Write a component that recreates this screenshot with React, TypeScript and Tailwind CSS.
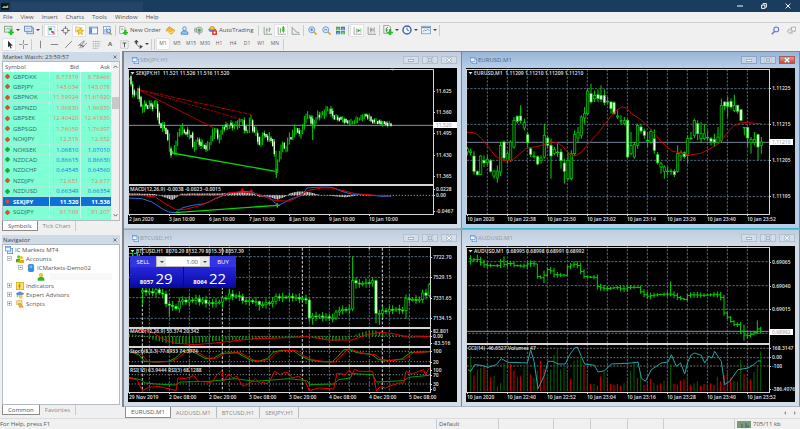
import React, { useState } from "react";

type Point = [number, number];
// x, high, body top, body bottom, low, 1 = rising
type Candle = [number, number, number, number, number, number];

const GREEN = "#00d800";
const SILVER = "#d4d4d4";
const GRID = "#56697c";

const toPath = (points: Point[]) => points.map((p) => p.join(",")).join(" ");

const valueAt = (points: Point[], x: number) => {
  const next = points.findIndex((p) => p[0] >= x);
  if (next === -1) return points[points.length - 1][1];
  if (next === 0) return points[0][1];
  const [x0, y0] = points[next - 1];
  const [x1, y1] = points[next];
  return y0 + ((y1 - y0) * (x - x0)) / (x1 - x0);
};

const steps = (from: number, to: number, step: number) =>
  Array.from({ length: Math.floor((to - from) / step) + 1 }, (_, i) => from + i * step);

/* ---------- market data ---------- */

const quotes: [string, string, string, "up" | "down"][] = [
  ["GBPDKK", "8.77319", "8.78466", "down"],
  ["GBPJPY", "143.034", "143.078", "down"],
  ["GBPNOK", "11.59924", "11.61920", "down"],
  ["GBPNZD", "1.96830", "1.96930", "down"],
  ["GBPSEK", "12.40420", "12.41830", "down"],
  ["GBPSGD", "1.76059", "1.76397", "down"],
  ["NOKJPY", "12.315", "12.332", "down"],
  ["NOKSEK", "1.06810", "1.07010", "up"],
  ["NZDCAD", "0.86615", "0.86630", "up"],
  ["NZDCHF", "0.64545", "0.64560", "up"],
  ["NZDJPY", "72.651", "72.677", "down"],
  ["NZDUSD", "0.66349", "0.66354", "up"],
  ["SEKJPY", "11.520", "11.536", "down"],
  ["SGDJPY", "81.169", "81.207", "down"],
];

const sekPrice: Point[] = [
  [22, 80], [28, 100], [33, 125], [40, 130], [47, 115], [52, 140], [58, 165], [64, 175], [68, 155], [76, 165],
  [84, 155], [92, 165], [98, 150], [103, 160], [107, 190], [112, 215], [120, 225], [130, 230], [137, 260], [142, 290],
  [148, 305], [153, 300], [160, 285], [166, 255], [175, 225], [183, 240], [192, 240], [200, 250], [207, 250], [212, 285],
  [218, 280], [226, 262], [234, 275], [243, 280], [252, 288], [260, 280], [268, 255], [276, 235], [283, 240], [288, 262],
  [296, 250], [302, 225], [312, 225], [322, 220], [332, 222], [344, 218], [352, 210], [362, 208], [368, 235], [376, 238],
  [382, 208], [387, 205], [393, 235], [402, 243], [408, 265], [413, 280], [420, 250], [430, 250], [440, 260], [447, 262],
  [455, 285], [460, 340], [463, 360], [468, 320], [474, 300], [480, 275], [486, 290], [494, 285], [500, 255], [508, 255],
  [518, 230], [526, 240], [534, 245], [540, 240], [546, 200], [554, 192], [564, 195], [570, 220], [576, 215], [584, 190],
  [594, 190], [604, 185], [614, 172], [622, 175], [632, 190], [644, 200], [656, 200], [669, 208], [682, 212], [694, 210],
  [704, 203], [716, 198], [729, 190], [739, 195], [749, 208], [760, 208], [772, 212], [784, 214], [796, 216], [808, 218],
];

const sekMacd: Point[] = [
  [22, 424], [100, 426], [118, 432], [150, 444], [165, 436], [175, 425], [320, 424], [360, 418], [395, 424], [410, 434],
  [440, 434], [465, 443], [490, 434], [504, 424], [530, 418], [560, 420], [590, 428], [630, 432], [670, 436], [710, 430], [760, 431],
];

const sekRed: Point[] = [
  [20, 430], [50, 430], [100, 435], [130, 455], [160, 472], [190, 472], [230, 462], [260, 450], [290, 435], [320, 422],
  [360, 420], [400, 424], [430, 435], [460, 446], [490, 447], [504, 447], [530, 432], [560, 415], [600, 408], [630, 408],
  [660, 415], [700, 425], [760, 430], [804, 432],
];

const sekBlue: Point[] = [
  [20, 438], [60, 440], [90, 450], [120, 470], [140, 480], [160, 482], [180, 468], [210, 460], [250, 455], [280, 440],
  [320, 425], [350, 420], [380, 418], [410, 428], [440, 435], [455, 450], [470, 460], [490, 450], [504, 442], [540, 430],
  [555, 408], [600, 405], [630, 406], [660, 418], [690, 427], [730, 428], [780, 433], [808, 433],
];

const eurCandles: Candle[] = [
  [22, 285, 290, 300, 310, 1], [32, 290, 297, 302, 310, 1], [42, 298, 312, 358, 368, 0], [52, 355, 358, 368, 370, 0],
  [62, 310, 312, 368, 370, 1], [72, 310, 325, 333, 345, 0], [82, 310, 322, 332, 340, 1], [92, 322, 325, 358, 362, 0],
  [102, 355, 357, 372, 380, 1], [112, 340, 357, 378, 392, 1], [122, 270, 280, 360, 372, 1], [132, 265, 270, 318, 328, 0],
  [142, 300, 305, 325, 335, 1], [152, 265, 270, 325, 330, 1], [162, 195, 205, 285, 290, 1], [172, 190, 193, 208, 215, 0],
  [182, 160, 192, 206, 215, 0], [193, 200, 212, 228, 235, 1], [203, 240, 248, 272, 290, 0], [212, 285, 290, 307, 315, 0],
  [222, 298, 312, 314, 320, 1], [233, 310, 314, 336, 340, 0], [243, 310, 318, 326, 335, 1], [253, 215, 250, 315, 320, 1],
  [263, 250, 258, 280, 290, 0], [273, 260, 280, 312, 380, 0], [283, 285, 292, 304, 310, 1], [293, 275, 300, 302, 315, 1],
  [303, 290, 300, 326, 350, 0], [313, 320, 333, 358, 395, 0], [324, 300, 325, 380, 385, 1], [334, 295, 305, 380, 385, 1],
  [344, 235, 248, 305, 312, 1], [354, 225, 242, 258, 270, 1], [364, 190, 195, 250, 260, 1], [374, 165, 185, 198, 215, 1],
  [383, 110, 117, 185, 190, 1], [393, 95, 125, 150, 155, 0], [404, 115, 130, 140, 150, 1], [414, 112, 128, 140, 150, 0],
  [423, 100, 130, 142, 150, 0], [433, 112, 130, 152, 160, 0], [443, 135, 148, 150, 158, 1], [453, 148, 150, 170, 185, 0],
  [462, 148, 152, 185, 188, 0], [473, 175, 192, 195, 202, 1], [483, 190, 206, 208, 218, 1], [493, 195, 206, 215, 220, 1],
  [503, 200, 205, 315, 318, 0], [513, 240, 280, 305, 310, 1], [523, 270, 278, 315, 320, 1], [533, 215, 220, 280, 290, 1],
  [543, 215, 225, 237, 245, 0], [553, 230, 237, 250, 260, 0], [563, 240, 265, 267, 285, 1], [573, 232, 238, 270, 275, 1],
  [583, 232, 260, 295, 305, 0], [593, 300, 308, 332, 338, 0], [603, 330, 335, 345, 365, 1], [613, 340, 345, 358, 380, 1],
  [623, 345, 357, 359, 370, 1], [633, 350, 357, 359, 368, 1], [643, 352, 358, 368, 375, 0], [653, 280, 305, 358, 362, 1],
  [663, 295, 302, 312, 325, 1], [673, 298, 302, 314, 320, 0], [683, 250, 260, 310, 335, 1], [693, 240, 258, 260, 265, 1],
  [703, 200, 205, 250, 258, 1], [713, 205, 215, 245, 265, 0], [723, 210, 245, 260, 270, 1], [733, 215, 245, 260, 265, 1],
  [743, 235, 256, 258, 265, 1], [753, 255, 260, 268, 280, 0], [763, 245, 262, 270, 285, 0], [774, 225, 255, 272, 275, 1],
  [784, 140, 160, 265, 270, 1], [794, 148, 150, 162, 175, 0], [803, 135, 150, 163, 195, 0], [813, 140, 148, 165, 172, 0],
  [823, 128, 160, 175, 180, 1], [833, 158, 160, 178, 185, 0], [843, 172, 173, 205, 208, 0], [853, 225, 226, 228, 250, 1],
  [863, 225, 226, 258, 285, 0], [873, 255, 262, 272, 305, 1], [883, 240, 262, 272, 280, 1], [894, 245, 248, 285, 325, 0],
  [904, 255, 270, 280, 305, 1],
];

const eurAverage: Point[] = [
  [20, 241], [36, 241], [50, 246], [65, 260], [80, 278], [95, 298], [110, 315], [130, 325], [155, 325], [168, 315],
  [180, 305], [200, 288], [230, 284], [260, 275], [278, 270], [292, 272], [310, 285], [325, 305], [345, 312], [365, 300],
  [385, 275], [410, 248], [440, 210], [455, 190], [465, 178], [485, 165], [500, 168], [515, 185], [545, 205], [575, 235],
  [605, 270], [635, 297], [660, 302], [690, 309], [722, 304], [750, 290], [780, 272], [800, 245], [820, 222], [840, 213],
  [865, 211], [885, 214], [905, 215],
];

const btcCloses = [
  187, 192, 190, 195, 185, 195, 198, 228, 232, 235, 242, 220, 216, 222, 216, 218, 212, 222, 216, 226, 224, 227, 222, 222,
  210, 212, 198, 205, 203, 206, 218, 220, 218, 222, 220, 230, 230, 224, 226, 220, 206, 210, 207, 208, 205, 210, 208, 213,
  212, 216, 270, 264, 266, 264, 268, 266, 270, 270, 252, 248, 244, 246, 243, 158, 165, 168, 166, 164, 165, 158, 256, 256,
  248, 250, 244, 246, 243, 246, 248, 212, 215, 214, 215, 215, 195, 202, 170,
];

// bars whose wick reaches far past the body: index -> [high, low]
const btcWicks: Record<number, [number, number]> = {
  0: [170, 230], 8: [222, 265], 24: [205, 240], 26: [182, 215], 35: [218, 248], 50: [212, 282],
  51: [255, 290], 63: [85, 250], 64: [148, 182], 70: [155, 286], 71: [245, 290], 79: [200, 272],
};

const btcHistogram: Point[] = [
  [20, 318], [60, 322], [80, 330], [100, 337], [150, 348], [200, 347], [250, 343], [300, 337], [350, 336], [420, 333],
  [500, 328], [550, 326], [600, 335], [640, 340], [680, 333], [700, 320], [730, 310], [755, 306], [780, 315], [820, 322], [922, 323],
];

const btcSignal: Point[] = [
  [20, 312], [61, 306], [90, 312], [120, 332], [160, 346], [220, 350], [280, 345], [340, 338], [400, 332], [470, 330],
  [560, 326], [620, 336], [690, 336], [730, 322], [770, 313], [810, 316], [860, 328], [922, 325],
];

const btcStochastic: Point[] = [
  [20, 370], [50, 380], [68, 400], [100, 402], [140, 400], [160, 390], [180, 372], [200, 365], [230, 380], [250, 392],
  [275, 390], [300, 376], [345, 374], [365, 385], [385, 396], [410, 400], [435, 392], [455, 372], [480, 367], [515, 368],
  [530, 380], [560, 395], [600, 401], [630, 402], [645, 388], [665, 366], [680, 364], [705, 374], [750, 380], [770, 395],
  [800, 398], [840, 393], [865, 374], [922, 371],
];

const btcRsiFast: Point[] = [
  [20, 450], [45, 455], [61, 488], [80, 478], [110, 475], [130, 480], [150, 485], [162, 487], [168, 450], [190, 452],
  [215, 443], [230, 460], [270, 463], [285, 440], [300, 428], [305, 460], [320, 438], [332, 450], [345, 445], [362, 475],
  [375, 470], [390, 460], [400, 452], [415, 466], [425, 462], [432, 468], [445, 456], [458, 430], [475, 440], [490, 432],
  [500, 435], [510, 450], [530, 445], [550, 460], [562, 488], [590, 480], [635, 483], [645, 435], [670, 440], [682, 425],
  [690, 440], [697, 424], [710, 430], [740, 430], [752, 430], [763, 488], [775, 476], [790, 480], [810, 472], [830, 465],
  [845, 465], [852, 430], [870, 438], [890, 430], [905, 425], [910, 440], [922, 420],
];

const btcRsiSlow: Point[] = [
  [20, 448], [55, 455], [70, 465], [100, 468], [160, 471], [175, 462], [260, 460], [340, 452], [400, 460], [500, 452],
  [555, 458], [563, 470], [635, 468], [650, 455], [685, 450], [692, 437], [752, 440], [763, 462], [845, 458], [860, 448], [922, 442],
];

const audPrice: Point[] = [
  [38, 92], [48, 100], [58, 90], [68, 100], [80, 110], [100, 113], [125, 113], [133, 100], [145, 112], [158, 103],
  [170, 112], [200, 115], [218, 105], [235, 108], [242, 145], [255, 150], [262, 145], [268, 125], [280, 125], [292, 140],
  [325, 142], [330, 118], [345, 110], [360, 108], [368, 120], [380, 145], [390, 147], [415, 148], [420, 175], [435, 180],
  [450, 182], [480, 178], [500, 185], [510, 178], [545, 178], [555, 195], [570, 205], [600, 200], [630, 198], [640, 198],
  [650, 200], [665, 210], [685, 215], [695, 200], [740, 202], [765, 200], [780, 198], [795, 210], [803, 255], [815, 270],
  [830, 290], [845, 290], [855, 315], [868, 325], [885, 318], [898, 310], [905, 300], [912, 310],
];

const audWicks: Record<number, [number, number]> = {
  0: [82, 110], 2: [80, 102], 10: [85, 118], 20: [108, 152], 22: [128, 165], 60: [160, 205], 82: [290, 338], 86: [278, 318],
};

const audCci: Point[] = [
  [30, 425], [38, 430], [50, 410], [70, 412], [90, 418], [115, 410], [130, 392], [150, 403], [190, 404], [208, 405],
  [218, 365], [228, 400], [240, 482], [260, 440], [270, 400], [285, 400], [300, 408], [322, 408], [335, 380], [350, 360],
  [358, 357], [370, 385], [380, 408], [410, 412], [420, 432], [440, 428], [460, 408], [520, 405], [540, 402], [550, 450],
  [562, 460], [580, 425], [610, 405], [630, 402], [640, 380], [655, 415], [668, 405], [680, 438], [690, 400], [700, 380],
  [710, 375], [730, 382], [740, 405], [752, 385], [762, 390], [770, 370], [790, 400], [800, 470], [815, 460], [840, 425],
  [870, 420], [890, 408], [900, 398], [910, 400],
];

// negative = falling volume, drawn red
const audVolumes = [
  105, -48, 65, 70, -75, 62, -42, 46, -15, 25, 85, 52, -82, -62, 42, -45, 72, 85, -50, 40, 62, -92, -68, 52, 64, 110, 130,
  66, 72, 60, -38, 92, 95, 102, -78, 50, -22, 22, -18, -45, 60, -40, -22, -20, -22, -18, 24, -36, 62, 90, -40, 52, -20, -24,
  -38, 26, -20, -24, 32, -40, 82, -22, -20, -32, -36, 46, -20, 24, 30, -18, -22, 20, -24, -20, 44, -30, -48, -60, -42, 32,
  -28, 95, -52, 40, -36, 58, 80, 120,
];

/* ---------- chart pieces ---------- */

const Grid: React.FC<{ xs: number[]; ys: number[]; right: number; bottom: number }> = ({ xs, ys, right, bottom }) => (
  <g stroke={GRID} strokeWidth="3" strokeDasharray="7 4">
    {xs.map((x) => (
      <line key={`x${x}`} x1={x} x2={x} y1="52" y2={bottom} />
    ))}
    {ys.map((y) => (
      <line key={`y${y}`} x1="20" x2={right} y1={y} y2={y} />
    ))}
  </g>
);

const Candles: React.FC<{ data: Candle[] }> = ({ data }) => (
  <g stroke={GREEN} strokeWidth="2">
    {data.map(([x, high, top, bottom, low, up]) => (
      <g key={x}>
        <line x1={x} x2={x} y1={high} y2={low} strokeWidth="3" />
        <rect x={x - 3.5} y={top} width="7" height={Math.max(bottom - top, 2)} fill={up ? "#002800" : "#f4fff4"} />
      </g>
    ))}
  </g>
);

// Bars too narrow for an outlined body.
const ThinCandles: React.FC<{ data: Candle[] }> = ({ data }) => (
  <g>
    {data.map(([x, high, top, bottom, low, up]) => (
      <g key={x}>
        <line x1={x} x2={x} y1={high} y2={low} stroke={GREEN} strokeWidth="3" />
        {!up && <line x1={x} x2={x} y1={top} y2={bottom} stroke="#d8ffd8" strokeWidth="4" />}
      </g>
    ))}
  </g>
);

const Line: React.FC<{ points: Point[]; color: string }> = ({ points, color }) => (
  <polyline points={toPath(points)} fill="none" stroke={color} strokeWidth="3" strokeLinejoin="round" />
);

interface ChartProps {
  name: string;
  header: string;
  origin: Point;
  right: number;
  separators: number[];
  bottom: number;
  dates: string[];
  prices: [string, number][];
  notes?: [string, number][];
  tag?: [string, number];
  children: React.ReactNode;
}

// Labels use chart pixels, series use a grid three times as fine.
const Chart: React.FC<ChartProps> = ({
  name, header, origin, right, separators, bottom, dates, prices, notes = [], tag, children,
}) => (
  <svg viewBox="0 0 329 156" preserveAspectRatio="xMinYMin meet" className="block h-full w-full bg-black" role="img" aria-label={name}>
    <svg x="0" y="0" width="329" height="156" viewBox={`${origin[0]} ${origin[1]} 987 468`}>
      {children}
    </svg>
    <g stroke={SILVER} strokeWidth="1" fill="none" shapeRendering="crispEdges">
      <rect x="0.5" y="1.5" width={right} height={bottom - 1} />
      {separators.map((y) => (
        <rect key={y} x="0.5" y={y + 0.5} width={right} height="1" fill="#777777" />
      ))}
      {dates.map((d, i) => (
        <line key={d} x1={1.5 + i * 40} x2={1.5 + i * 40} y1={bottom} y2={bottom + 2} />
      ))}
      {prices.map(([label, y]) => (
        <line key={label + y} x1={right} x2={right + 2} y1={y + 0.5} y2={y + 0.5} />
      ))}
    </g>
    <g fill="#dcdcdc" className="font-['Noto_Sans',sans-serif] text-[5px] font-semibold">
      <path d="M2.5 4h4l-2 2.4z" />
      <text x="8" y="7" className="whitespace-pre">{header}</text>
      {notes.map(([label, y]) => (
        <text key={label} x="2" y={y}>{label}</text>
      ))}
      {prices.map(([label, y]) => (
        <text key={label + y} x={right + 3} y={y + 2}>{label}</text>
      ))}
      {dates.map((d, i) => (
        <text key={d} x={1 + i * 40} y="153">{d}</text>
      ))}
    </g>
    {tag && (
      <g>
        <rect x={right} y={tag[1] - 3} width="24" height="6" fill="#ffffff" />
        <text x={right + 3} y={tag[1] + 2} fill="#9a9a9a" className="font-['Noto_Sans',sans-serif] text-[5px]">{tag[0]}</text>
      </g>
    )}
  </svg>
);

const SekJpyChart = () => {
  const bars: Candle[] = steps(22, 808, 5).map((x, i) => {
    const open = valueAt(sekPrice, x - 5);
    const close = valueAt(sekPrice, x);
    const calm = x > 640;
    const shift = Math.sin(i * 4.1) * (calm ? 2 : 4);
    const wick = 3 + Math.abs(Math.sin(i * 2.3)) * (calm ? 6 : 10);
    const top = Math.min(open, close) + shift;
    const bottom = Math.max(open, close) + shift;
    return [x, top - wick, top - 4, bottom + 4, bottom + wick, close < open || i % 4 === 0 ? 1 : 0];
  });
  return (
    <Chart
      name="SEKJPY H1 chart"
      header="SEKJPY,H1  11.521 11.526 11.516 11.520"
      origin={[18, 48]}
      right={305}
      separators={[116]}
      bottom={146}
      dates={["2 Jan 2020", "3 Jan 10:00", "6 Jan 10:00", "7 Jan 10:00", "8 Jan 10:00", "9 Jan 10:00", "10 Jan 10:00"]}
      prices={[["11.625", 23], ["11.560", 44], ["11.495", 65], ["11.430", 87], ["11.365", 108], ["0.0228", 121], ["0.00", 127], ["-0.0467", 143]]}
      notes={[["MACD(12,26,9) -0.0038 -0.0023 -0.0015", 123]]}
      tag={["11.520", 57]}
    >
      <line x1="20" x2="934" y1="220" y2="220" stroke="#8593a3" strokeWidth="3" />
      <g stroke="#b00000" strokeWidth="3" fill="none">
        <path d="M47 112 283 232" />
        <path d="M47 112 362 203" strokeDasharray="8 4" />
        <path d="M47 112 388 188" strokeDasharray="14 3" />
      </g>
      <ThinCandles data={bars} />
      <line x1="572" x2="572" y1="215" y2="264" stroke={GREEN} strokeWidth="3" />
      <line x1="463" x2="463" y1="350" y2="378" stroke={GREEN} strokeWidth="3" />
      <path d="M150 303 460 358" stroke={GREEN} strokeWidth="4" />
      <line x1="20" x2="934" y1="430" y2="430" stroke={SILVER} strokeWidth="2" strokeDasharray="4 5" />
      <g stroke="#c4c4c4" strokeWidth="4">
        {steps(22, 800, 5).map((x) => (
          <line key={x} x1={x} x2={x} y1="430" y2={valueAt(sekMacd, x)} />
        ))}
      </g>
      <path d="M170 430H300" stroke="#d00000" strokeWidth="4" strokeDasharray="8 4" />
      <Line points={sekBlue} color="#1f6fe0" />
      <Line points={sekRed} color="#e00000" />
      <path d="M160 482 467 460" stroke={GREEN} strokeWidth="4" />
      <path d="M466 453v14M459 460h14" stroke={GREEN} strokeWidth="4" />
      <path d="M355 417l6-9 6 9zM382 420l6-9 6 9z" fill="#f00000" />
      <path d="M806 50l6 6 6-6z" fill="#8fa9c8" />
    </Chart>
  );
};

const EurUsdChart = () => (
  <Chart
    name="EURUSD M1 chart"
    header="EURUSD,M1  1.11209 1.11210 1.11209 1.11210"
    origin={[18, 48]}
    right={303}
    separators={[]}
    bottom={146}
    dates={["10 Jan 2020", "10 Jan 22:38", "10 Jan 22:50", "10 Jan 23:02", "10 Jan 23:14", "10 Jan 23:26", "10 Jan 23:40", "10 Jan 23:52"]}
    prices={[["1.11225", 20], ["1.11215", 56], ["1.11205", 92], ["1.11195", 128]]}
    tag={["1.11210", 74]}
  >
    <Grid xs={steps(82, 863, 60)} ys={[110, 217, 325, 434]} right={927} bottom={487} />
    <line x1="20" x2="927" y1="271" y2="271" stroke="#74849a" strokeWidth="3" />
    <Candles data={eurCandles} />
    <Line points={eurAverage} color="#cc0000" />
  </Chart>
);

const BtcUsdChart = () => {
  const bars: Candle[] = btcCloses.map((close, i) => {
    const open = i === 0 ? 192 : btcCloses[i - 1];
    const top = Math.min(open, close);
    const bottom = Math.max(open, close);
    const wick = 5 + Math.abs(Math.sin(i * 1.9)) * 8;
    const [high, low] = btcWicks[i] ?? [top - wick, bottom + wick];
    return [62 + i * 10, high, top, Math.max(bottom, top + 3), low, close <= open ? 1 : 0];
  });
  return (
    <Chart
      name="BTCUSD H1 chart"
      header="BTCUSD,H1  8070.29 8132.79 8015.39 8057.39"
      origin={[18, 54]}
      right={302}
      separators={[81, 100, 119]}
      bottom={146}
      dates={["29 Nov 2019", "2 Dec 08:00", "2 Dec 20:00", "3 Dec 08:00", "3 Dec 20:00", "4 Dec 08:00", "4 Dec 20:00", "5 Dec 08:00"]}
      prices={[["7722.70", 11], ["7529.15", 31], ["7331.65", 52], ["7134.15", 72], ["82.801", 85], ["0.00", 90], ["-83.516", 97], ["100", 105], ["20", 116], ["100", 124], ["70", 129], ["30", 138], ["0", 143]]}
      notes={[["MACD(12,26,9) 53.374 20.342", 87], ["Stoch(8,3,3) 77.6933 74.3974", 107], ["RSI(13) 63.9444  RSI(3) 68.1288", 126]]}
    >
      <Grid xs={steps(82, 862, 60)} ys={[86, 148, 209, 271]} right={924} bottom={490} />
      <g stroke="#d8d8d8" strokeWidth="3" strokeDasharray="8 5">
        <path d="M61 60V490M301 60V490M541 60V490M781 60V490" />
      </g>
      <g stroke="#bdbdbd" strokeWidth="2" strokeDasharray="4 5">
        <path d="M20 325H924M20 370H924M20 401H924M20 440H924M20 468H924" />
      </g>
      <path d="M22 76h10v8M36 76h10v8M52 78v8" stroke={GREEN} strokeWidth="4" fill="none" />
      <Candles data={bars} />
      <g stroke="#009a00" strokeWidth="4">
        {steps(22, 922, 10).map((x) => (
          <line key={x} x1={x} x2={x} y1="325" y2={valueAt(btcHistogram, x)} />
        ))}
      </g>
      <Line points={btcSignal} color="#e80000" />
      <Line points={btcStochastic} color="#00b800" />
      <Line points={btcStochastic.map(([x, y]): Point => [Math.min(x + 9, 924), y])} color="#e80000" />
      <Line points={btcRsiSlow} color="#00a000" />
      <Line points={btcRsiFast} color="#f00000" />
      <path d="M736 58l6 6 6-6z" fill="#b8c4d4" />
    </Chart>
  );
};

const AudUsdChart = () => (
  <Chart
    name="AUDUSD M1 chart"
    header="AUDUSD,M1  0.68995 0.68998 0.68991 0.68992"
    origin={[24, 54]}
    right={303}
    separators={[97]}
    bottom={146}
    dates={["10 Jan 2020", "10 Jan 22:40", "10 Jan 22:52", "10 Jan 23:04", "10 Jan 23:16", "10 Jan 23:28", "10 Jan 23:40", "10 Jan 23:52"]}
    prices={[["0.69065", 16], ["0.69040", 40], ["0.69015", 63], ["168.3147", 102], ["0.00", 111], ["-100", 120], ["-386.4976", 143]]}
    notes={[["CCI(14) -46.6527  Volumes 47", 104]]}
    tag={["0.68992", 86]}
  >
    <Grid xs={steps(88, 868, 60)} ys={[101, 173, 244, 316]} right={932} bottom={490} />
    <line x1="26" x2="932" y1="310" y2="310" stroke="#8494a6" strokeWidth="3" />
    <path d="M26 361H932M26 389H932M26 414H932" stroke="#a8a8a8" strokeWidth="2" strokeDasharray="6 4" />
    <g stroke={GREEN} strokeWidth="3">
      {steps(38, 912, 10).map((x, i) => {
        const open = valueAt(audPrice, x - 5);
        const close = valueAt(audPrice, x + 5);
        const wick = 2 + Math.abs(Math.sin(i * 2.7)) * 7;
        const [high, low] = audWicks[i] ?? [Math.min(open, close) - wick, Math.max(open, close) + wick];
        return <path key={x} d={`M${x - 5} ${open}H${x}M${x} ${close}H${x + 5}M${x} ${high}V${low}`} />;
      })}
    </g>
    <g strokeWidth="3">
      {audVolumes.map((v, i) => (
        <line
          key={i}
          x1={38 + i * 10}
          x2={38 + i * 10}
          y1="490"
          y2={490 - Math.abs(v)}
          stroke={v < 0 ? "#e00000" : "#006400"}
        />
      ))}
    </g>
    <Line points={audCci} color="#25a5a5" />
  </Chart>
);

/* ---------- icons ---------- */

const icons: Record<string, React.ReactNode> = {
  newChart: (
    <>
      <rect x="0.5" y="1.5" width="9" height="7" fill="#eaf2e6" stroke="#7c9a74" />
      <path d="M2 6l2-2 2 1 2-2" fill="none" stroke="#6a9ad0" />
      <path d="M7 5h3v3h2v2h-2v2H7v-2H5V8h2z" fill="#1fc21f" />
    </>
  ),
  profiles: (
    <>
      <rect x="3.5" y="3.5" width="8" height="7" fill="#cfe0f4" stroke="#6c90bd" />
      <rect x="0.5" y="1.5" width="9" height="6" fill="#e8f1fb" stroke="#5b83b5" />
      <path d="M2 5l2-1 2 1 2-2" fill="none" stroke="#7aa0ce" />
    </>
  ),
  marketWatch: (
    <>
      <rect x="1.5" y="0.5" width="9" height="11" fill="#f4f9ff" stroke="#a8c4e4" />
      <path d="M2 3l4-1 1 3-4 1z" fill="#28b828" />
      <path d="M5 6l4 1 1 4-4-2z" fill="#ee4b22" />
    </>
  ),
  target: (
    <>
      <circle cx="6" cy="6" r="3.5" fill="none" stroke="#666666" />
      <path d="M6 0v4M6 8v4M0 6h4M8 6h4" stroke="#666666" />
    </>
  ),
  navigator: (
    <>
      <path d="M0 1h4l1 1h4v6H0z" fill="#fae79a" stroke="#d0a83c" strokeWidth="0.7" />
      <path d="M7 3l1.3 2.8 3.4.3-2.5 2.1.8 3.3L7 9.800l-3 1.700.8-3.300-2.500-2.100 3.400-.3z" fill="#ffd52e" stroke="#c08d12" strokeWidth="0.7" />
    </>
  ),
  terminal: (
    <>
      <rect x="0.5" y="1.5" width="11" height="9" fill="#f5faff" stroke="#4679b8" />
      <rect x="1" y="2" width="3" height="8" fill="#5f93d2" />
      <path d="M4 3h7" stroke="#9dbde0" />
    </>
  ),
  tester: (
    <>
      <rect x="0.5" y="0.5" width="9" height="10" fill="#ffffff" stroke="#6f93c0" />
      <path d="M2.500 9V4M4.500 9V2" stroke="#4d83c5" />
      <circle cx="7.5" cy="6.5" r="2.5" fill="#cfe3f8" stroke="#3d6ba5" />
      <path d="M9 9l2.5 2.5" stroke="#b98925" strokeWidth="1.5" />
    </>
  ),
  newOrder: (
    <>
      <path d="M1 .5h5l2 2V10H1z" fill="#ffffff" stroke="#8a9a8a" />
      <path d="M2.500 3h3M2.500 5h4" stroke="#a0a0a0" />
      <path d="M7 5h3v3h2v2h-2v2H7v-2H5V8h2z" fill="#1fc21f" />
    </>
  ),
  book: (
    <>
      <path d="M0 6l4-5 8 5-5 5z" fill="#f3bb35" stroke="#b47a12" strokeWidth="0.8" />
      <path d="M1 7l5.500 2.500L11 6" fill="none" stroke="#fff0b8" />
    </>
  ),
  community: (
    <>
      <circle cx="6" cy="3.5" r="2.5" fill="#d4e9fb" stroke="#4589c9" />
      <path d="M1.500 11V8.500L4 6.500h4l2.500 2V11z" fill="#8cc2f0" stroke="#3b7fc4" />
    </>
  ),
  signals: (
    <>
      <circle cx="7" cy="5.5" r="4.2" fill="#cfd4d4" stroke="#8b9494" />
      <circle cx="7" cy="5.5" r="2" fill="#4da24d" />
      <path d="M1.500 2Q0 5.500 1.500 9M3 3Q2 5.500 3 8M7 8v4" fill="none" stroke="#7e9090" />
    </>
  ),
  autoTrading: (
    <>
      <circle cx="5.5" cy="4" r="3.5" fill="#f4bf3f" stroke="#b78618" strokeWidth="0.8" />
      <path d="M0 3.500q6 2 11 0l-1 4H2z" fill="#4f8fd3" />
      <rect x="5.5" y="5.5" width="6.5" height="6.5" rx="1" fill="#e23a28" />
      <rect x="7.5" y="7.5" width="2.500" height="2.5" fill="#ffffff" />
    </>
  ),
  bars: <path d="M1.500 1v10H12M5 3v6M5 5h2M8.500 2v6M8.500 4h2" fill="none" stroke="#6f936f" />,
  candles: (
    <>
      <path d="M1.500 1v10H12" fill="none" stroke="#888888" />
      <path d="M4.500 3v6M8.500 0v9" stroke="#2a7a2a" />
      <rect x="7" y="1.5" width="3" height="6" fill="#27c427" />
    </>
  ),
  lineChart: <path d="M1.500 1v10H12M2 3l3 2 2 3 4 1" fill="none" stroke="#7a8c7a" />,
  zoomIn: (
    <>
      <path d="M8 8l3.500 3.500" stroke="#d2a02c" strokeWidth="2" />
      <circle cx="5" cy="5" r="4" fill="#d8ebfd" stroke="#4c83c4" />
      <path d="M3 5h4M5 3v4" stroke="#2c67b0" />
    </>
  ),
  zoomOut: (
    <>
      <path d="M8 8l3.500 3.500" stroke="#d2a02c" strokeWidth="2" />
      <circle cx="5" cy="5" r="4" fill="#d8ebfd" stroke="#4c83c4" />
      <path d="M3 5h4" stroke="#2c67b0" />
    </>
  ),
  tile: (
    <>
      <path d="M0 1h5.500v4.500H0zM6.500 6.500H12V11H6.500z" fill="#3fae3f" />
      <path d="M6.500 1H12v4.500H6.500zM0 6.500h5.500V11H0z" fill="#3b72c8" />
      <path d="M1 4h3.500M7.500 4H11M1 9.500h3.500M7.500 9.500H11" stroke="#dfeaf6" />
    </>
  ),
  autoScroll: (
    <>
      <path d="M1.500 1v10H12M4.500 3v6M10.500 3v6" fill="none" stroke="#8d988d" />
      <path d="M6 3.500l4 2.500-4 2.500z" fill="#27b827" />
    </>
  ),
  shift: <path d="M1.500 1v10H12M5 2v7M9.500 2v7M5 5h4M7 3l-2 2 2 2" fill="none" stroke="#7d7d7d" />,
  indicators: (
    <>
      <path d="M1 .5h6l2 2V10H1z" fill="#f6faf6" stroke="#7e957e" />
      <path d="M4 9V4.500Q4 3 6 3M3 6h3" fill="none" stroke="#3c7a3c" />
      <path d="M7 5h3v3h2v2h-2v2H7v-2H5V8h2z" fill="#1fc21f" />
    </>
  ),
  clock: (
    <>
      <circle cx="6" cy="6" r="4.8" fill="#f4f9ff" stroke="#3468b4" strokeWidth="1.8" />
      <path d="M6 3v3l2.500 1" fill="none" stroke="#555555" />
    </>
  ),
  template: (
    <>
      <rect x="0.5" y="1.5" width="11" height="9" fill="#eaf3fc" stroke="#7d9ec4" />
      <path d="M1 3h10" stroke="#5f8dc4" strokeWidth="1.5" />
      <path d="M2 8l2-2 2 1 2-2 2 2" fill="none" stroke="#6666aa" strokeWidth="0.8" />
    </>
  ),
  cursor: <path d="M4 1v9l2-2 1.500 3.500 1.500-.7L7.500 7.500h3z" fill="#333333" />,
  crosshair: <path d="M6 0v5M6 7v5M0 6h5M7 6h5" stroke="#777777" />,
  vLine: <path d="M6 1v10" stroke="#666666" />,
  hLine: <path d="M1 6h10" stroke="#666666" />,
  trend: <path d="M1.500 10.500l9-9" stroke="#666666" />,
  channel: (
    <>
      <path d="M0 8l8-7M4 11l8-7M2 11l7-10" stroke="#777777" />
      <path d="M2 6l6 3" stroke="#666666" strokeWidth="1.5" />
    </>
  ),
  fibo: <path d="M1 2h10M1 5h10M1 8h10M1 11h7" stroke="#888888" strokeDasharray="2 1" />,
  label: (
    <>
      <rect x="1" y="1" width="10" height="10" fill="none" stroke="#a4a4a4" strokeDasharray="1.5 1" />
      <path d="M3.500 4h5M6 4v5.500" stroke="#555555" strokeWidth="1.3" />
    </>
  ),
  arrows: (
    <>
      <path d="M1 4l3-3 3 3H5v2H3V4z" fill="#444444" />
      <path d="M4 6l4 4" stroke="#666666" />
      <path d="M8 7l4 2-4 3z" fill="#444444" />
    </>
  ),
  folder: (
    <>
      <rect x="3.5" y="3.5" width="8" height="8" fill="#d6e8fb" stroke="#4a86cf" />
      <rect x="0.5" y="0.5" width="8" height="7" fill="#eef6ff" stroke="#4a86cf" />
      <path d="M1 2h7" stroke="#4a86cf" />
    </>
  ),
  accounts: (
    <>
      <circle cx="4" cy="3" r="2.5" fill="#5fc92f" />
      <path d="M0 11V6h6v5z" fill="#3fae1f" />
      <circle cx="8" cy="4" r="2.5" fill="#f6c32e" />
      <path d="M4 12V7.500h8V12z" fill="#e7a51a" />
    </>
  ),
  server: (
    <>
      <rect x="2" y="0.5" width="8" height="11" rx="2" fill="#2f8de4" stroke="#1c66b4" strokeWidth="0.8" />
      <path d="M4 3h4M4 5h4" stroke="#d4e9ff" />
    </>
  ),
  user: (
    <>
      <circle cx="6" cy="3" r="2.7" fill="#f2cf3a" stroke="#a08512" strokeWidth="0.6" />
      <path d="M1 11.500V8l3-2h4l3 2v3.500z" fill="#36b51c" />
    </>
  ),
  indicator: (
    <>
      <rect x="0.5" y="0.5" width="11" height="11" fill="#ffe25c" stroke="#caa11c" />
      <path d="M5 10V4q0-1.500 2-1.500M3.500 6H7" fill="none" stroke="#7d6410" />
    </>
  ),
  expert: (
    <>
      <path d="M0 4l6-3 6 3-6 3z" fill="#4b97dc" stroke="#2567a8" strokeWidth="0.6" />
      <circle cx="7" cy="8.5" r="3" fill="#f4c650" />
      <path d="M2 5v4" stroke="#2567a8" />
    </>
  ),
  script: (
    <>
      <path d="M1 1h8v6H1z" fill="#fbe28a" stroke="#c29a2b" strokeWidth="0.8" />
      <path d="M4 5l4 1 3 5H5z" fill="#f1b72c" stroke="#b8861a" strokeWidth="0.8" />
    </>
  ),
  search: (
    <>
      <circle cx="7" cy="4.5" r="3.2" fill="#eef2ff" stroke="#6676bc" strokeWidth="1.5" />
      <path d="M5 7l-4 4" stroke="#6676bc" strokeWidth="2" />
    </>
  ),
  chat: (
    <>
      <path d="M6 1.500h5.500v5H10V8L8.500 6.500H6z" fill="#f5f5f5" stroke="#9b9b9b" />
      <path d="M3.500 4a2.800 2.800 0 1 0 2 5L7 10l-.5-2A2.800 2.800 0 0 0 3.500 4z" fill="#e4e4e4" stroke="#9b9b9b" />
    </>
  ),
};

const Icon: React.FC<{ name: string; className?: string }> = ({ name, className = "size-[9px]" }) => (
  <svg viewBox="0 0 12 12" className={`${className} shrink-0`} aria-hidden="true">
    {icons[name]}
  </svg>
);

/* ---------- toolbars ---------- */

const ToolButton: React.FC<{ icon: string; pressed?: boolean; menu?: boolean }> = ({ icon, pressed, menu }) => (
  <button
    aria-label={icon}
    className={`flex h-[13px] shrink-0 items-center ${menu ? "w-[19px]" : "w-[14px] justify-center"} ${
      pressed ? "border border-[#e2e2e2] bg-white" : ""
    }`}
  >
    <Icon name={icon} className={menu ? "ml-[2px] size-[10px]" : "size-[9px]"} />
    {menu && <span className="ml-[2px] border-x-2 border-t-2 border-x-transparent border-t-[#444444]" />}
  </button>
);

const Separator = () => <span className="mx-px h-[11px] w-px shrink-0 bg-[#cccccc]" />;

const Toolbars = () => {
  const frames = ["M1", "M5", "M15", "M30", "H1", "H4", "D1", "W1", "MN"];
  const [frame, setFrame] = useState("M1");
  return (
    <div className="bg-[#f0f0f0]">
      <div className="flex h-[14px] items-center pl-[2px] pr-[2px]">
        <ToolButton icon="newChart" menu />
        <span className="w-px" />
        <ToolButton icon="profiles" menu />
        <Separator />
        <ToolButton icon="marketWatch" pressed />
        <ToolButton icon="target" />
        <ToolButton icon="navigator" pressed />
        <ToolButton icon="terminal" />
        <ToolButton icon="tester" />
        <Separator />
        <button className="flex w-[46px] shrink-0 items-center gap-[2px] pl-[2px] whitespace-nowrap">
          <Icon name="newOrder" /> New Order
        </button>
        <ToolButton icon="book" />
        <ToolButton icon="community" />
        <ToolButton icon="signals" />
        <button className="flex w-[52px] shrink-0 items-center gap-[2px] pl-[3px] whitespace-nowrap">
          <Icon name="autoTrading" /> AutoTrading
        </button>
        <Separator />
        <ToolButton icon="bars" />
        <ToolButton icon="candles" pressed />
        <ToolButton icon="lineChart" />
        <Separator />
        <ToolButton icon="zoomIn" />
        <ToolButton icon="zoomOut" />
        <ToolButton icon="tile" />
        <Separator />
        <ToolButton icon="autoScroll" pressed />
        <ToolButton icon="shift" />
        <Separator />
        <ToolButton icon="indicators" menu />
        <ToolButton icon="clock" menu />
        <ToolButton icon="template" menu />
        <Separator />
        <div className="ml-auto flex gap-[2px]">
          <ToolButton icon="search" />
          <ToolButton icon="chat" />
        </div>
      </div>
      <div className="flex h-[14px] items-center pl-[2px]">
        <ToolButton icon="cursor" pressed />
        <ToolButton icon="crosshair" />
        <Separator />
        <ToolButton icon="vLine" />
        <ToolButton icon="hLine" />
        <ToolButton icon="trend" />
        <ToolButton icon="channel" />
        <ToolButton icon="fibo" />
        <button className="w-[14px] shrink-0 text-center font-bold text-[#666666]">A</button>
        <ToolButton icon="label" />
        <ToolButton icon="arrows" menu />
        <Separator />
        <Separator />
        {frames.map((f) => (
          <button
            key={f}
            onClick={() => setFrame(f)}
            className={`h-[12px] w-[14px] shrink-0 text-center text-[5px] text-[#666666] ${
              frame === f ? "border border-[#e2e2e2] bg-white" : ""
            }`}
          >
            {f}
          </button>
        ))}
        <Separator />
      </div>
    </div>
  );
};

/* ---------- side panels ---------- */

const PanelTitle: React.FC<{ children: React.ReactNode }> = ({ children }) => (
  <div className="flex h-[9px] shrink-0 items-center justify-between bg-[#cddae8] px-px leading-none text-[#444444]">
    <span>{children}</span>
    <button aria-label="Close panel" className="flex pr-[2px]">
      <svg viewBox="0 0 8 8" className="size-[4px]" aria-hidden="true">
        <path d="M1 1l6 6M7 1L1 7" stroke="#555555" strokeWidth="1.5" />
      </svg>
    </button>
  </div>
);

const PanelTabs: React.FC<{ names: string[] }> = ({ names }) => {
  const [active, setActive] = useState(names[0]);
  return (
    <div role="tablist" className="flex h-[11px] shrink-0 items-start bg-[#f0f0f0]">
      {names.map((name) => (
        <button
          key={name}
          role="tab"
          aria-selected={active === name}
          onClick={() => setActive(name)}
          className={`h-[10px] border-r px-[5px] leading-none ${
            active === name ? "border-b border-l border-[#8c8c8c] bg-white text-[#555555]" : "border-[#c8c8c8] text-[#888888]"
          }`}
        >
          {name}
        </button>
      ))}
    </div>
  );
};

const MarketWatch = () => {
  const [selected, setSelected] = useState("SEKJPY");
  return (
    <section className="flex shrink-0 flex-col">
      <PanelTitle>Market Watch: 23:59:57</PanelTitle>
      <div className="flex h-[160px] border border-[#b4bac2] bg-white">
        <div className="min-w-0 flex-1 bg-[#7fffd4]">
          <table className="h-[156px] w-full table-fixed border-collapse leading-none">
            <thead>
              <tr className="h-[10px] bg-white text-[#555555]">
                <th className="w-[46px] pl-[2px] text-left font-normal">Symbol</th>
                <th className="pr-px text-right font-normal">Bid</th>
                <th className="pr-px text-right font-normal">Ask</th>
              </tr>
            </thead>
            <tbody>
              {quotes.map(([symbol, bid, ask, move]) => {
                const active = symbol === selected;
                const price = active ? "font-bold text-white" : move === "up" ? "text-[#1d74e0]" : "text-[#e8806a]";
                return (
                  <tr
                    key={symbol}
                    onClick={() => setSelected(symbol)}
                    className={`border-b border-[#a5f0da] ${active ? "bg-[#0f6fd8]" : "bg-[#7fffd4]"}`}
                  >
                    <td className={active ? "font-bold text-white" : "text-[#35665a]"}>
                      <span className="flex items-center gap-[3px] pl-[2px]">
                        <svg viewBox="0 0 10 10" className="size-[5px] shrink-0" aria-hidden="true">
                          <path
                            d="M5 0l5 5-5 5-5-5z"
                            fill={move === "up" ? "#24a83a" : "#ea4a24"}
                            stroke={move === "up" ? "#178029" : "#b8350f"}
                          />
                        </svg>
                        {symbol}
                      </span>
                    </td>
                    <td className={`border-l border-[#c4f5e8] pr-px text-right ${price}`}>{bid}</td>
                    <td className={`border-l border-[#c4f5e8] pr-px text-right ${price}`}>{ask}</td>
                  </tr>
                );
              })}
            </tbody>
          </table>
        </div>
        <div className="flex w-[8px] shrink-0 flex-col items-center justify-between bg-[#f0f0f0] py-[2px]">
          <svg viewBox="0 0 8 8" className="size-[5px]" aria-hidden="true">
            <path d="M1 6l3-3 3 3" fill="none" stroke="#555555" strokeWidth="1.5" />
          </svg>
          <span className="mb-[76px] h-[12px] w-[7px] bg-[#c8c8c8]" />
          <svg viewBox="0 0 8 8" className="size-[5px]" aria-hidden="true">
            <path d="M1 2l3 3 3-3" fill="none" stroke="#555555" strokeWidth="1.5" />
          </svg>
        </div>
      </div>
      <PanelTabs names={["Symbols", "Tick Chart"]} />
    </section>
  );
};

const TreeRow: React.FC<{ icon: string; toggle?: "+" | "-"; className?: string; children?: React.ReactNode }> = ({
  icon, toggle, className = "", children,
}) => (
  <li className={`flex h-[9px] items-center gap-[2px] whitespace-nowrap leading-none ${className}`}>
    {toggle && (
      <button aria-label="Toggle branch" className="mr-[2px] flex shrink-0">
        <svg viewBox="0 0 10 10" className="size-[5px]" aria-hidden="true">
          <rect x="1" y="1" width="8" height="8" fill="#ffffff" stroke="#b4b4b4" strokeWidth="1.5" />
          <path d={toggle === "+" ? "M3 5h4M5 3v4" : "M3 5h4"} stroke="#666666" strokeWidth="1.5" />
        </svg>
      </button>
    )}
    <Icon name={icon} className="size-[8px]" />
    {children}
  </li>
);

const Navigator = () => (
  <section className="flex min-h-0 flex-1 flex-col">
    <PanelTitle>Navigator</PanelTitle>
    <ul className="flex-1 border border-[#b4bac2] bg-white text-[#555555]">
      <TreeRow icon="folder" className="pl-[2px]">IC Markets MT4</TreeRow>
      <TreeRow icon="accounts" toggle="-" className="pl-[4px]">Accounts</TreeRow>
      <TreeRow icon="server" toggle="-" className="pl-[15px]">ICMarkets-Demo02</TreeRow>
      <TreeRow icon="user" className="pl-[34px]">
        <span className="ml-[3px] h-[7px] w-[62px] bg-[#f8f8f8]" />
      </TreeRow>
      <TreeRow icon="indicator" toggle="+" className="pl-[4px]">Indicators</TreeRow>
      <TreeRow icon="expert" toggle="+" className="pl-[4px]">Expert Advisors</TreeRow>
      <TreeRow icon="script" toggle="+" className="pl-[4px]">Scripts</TreeRow>
    </ul>
    <PanelTabs names={["Common", "Favorites"]} />
  </section>
);

/* ---------- chart windows ---------- */

const ChartWindow: React.FC<{ title: string; active?: boolean; children: React.ReactNode }> = ({ title, active, children }) => {
  const button = `flex h-[8px] w-[16px] items-center justify-center border ${
    active ? "border-[#8fa5c2] bg-[#c3d5ea]" : "border-[#b3c0cf] bg-[#d3deea]"
  }`;
  const stroke = active ? "#ffffff" : "#f7f9fb";
  return (
    <section
      className={`flex min-w-0 flex-col border-r border-[#7d8690] pl-[4px] pr-[4px] pb-[4px] border-b ${
        active ? "border-b-[#3fb4c4] bg-[#b5cfea]" : "border-b-[#a9b4c0] bg-[#d3deea]"
      }`}
    >
      <header
        className={`-mx-[4px] flex h-[16px] shrink-0 items-center pl-[8px] pr-[4px] ${
          active ? "bg-linear-to-b from-[#98b4d6] to-[#b5cfea]" : "bg-linear-to-b from-[#c0cddd] to-[#d3deea]"
        }`}
      >
        <Icon name="folder" className="size-[7px]" />
        <h2 className={`ml-px leading-none ${active ? "text-[#52667f]" : "text-[#8e99a6]"}`}>{title}</h2>
        <div className="ml-auto flex gap-[3px]">
          <button aria-label="Minimize" className={button}>
            <svg viewBox="0 0 10 8" className="h-[6px] w-[8px]">
              <path d="M1 4.500h8" stroke="#6f7e8f" strokeWidth="3" />
              <path d="M1.500 4.500h7" stroke={stroke} strokeWidth="1.8" />
            </svg>
          </button>
          <button aria-label="Maximize" className={button}>
            <svg viewBox="0 0 10 8" className="h-[6px] w-[8px]">
              <rect x="2" y="1" width="6" height="6" fill="none" stroke="#6f7e8f" strokeWidth="2.2" />
              <rect x="2" y="1" width="6" height="6" fill="none" stroke={stroke} strokeWidth="1.2" />
            </svg>
          </button>
          <button
            aria-label="Close"
            className={
              active
                ? "flex h-[8px] w-[16px] items-center justify-center border border-[#a85a55] bg-linear-to-b from-[#e39a8c] to-[#c8452f]"
                : button
            }
          >
            <svg viewBox="0 0 10 8" className="h-[6px] w-[8px]">
              <path d="M2 1l6 6M8 1L2 7" stroke="#6f7e8f" strokeWidth="3" />
              <path d="M2 1l6 6M8 1L2 7" stroke={stroke} strokeWidth="2" />
            </svg>
          </button>
        </div>
      </header>
      <div className="relative min-h-0 flex-1 bg-black">{children}</div>
    </section>
  );
};

const OneClickTrading = () => {
  const [lots, setLots] = useState("1.00");
  const price = "flex flex-1 items-end justify-center gap-[2px] border-[#0a0a78] bg-linear-to-b from-[#2626dc] to-[#0808a0] pb-[2px]";
  return (
    <div className="absolute left-[2px] top-[10px] flex h-[32px] w-[106px] flex-col text-white">
      <div className="flex h-[11px] bg-[#3434e0]">
        <button className="w-[26px] leading-none">SELL</button>
        <div className="flex flex-1 items-center border border-[#b8b8b8] bg-white">
          <button aria-label="Less" className="flex h-full w-[9px] items-center justify-center bg-[#e8e8e8]">
            <span className="border-x-2 border-t-2 border-x-transparent border-t-[#444444]" />
          </button>
          <input
            aria-label="Lots"
            value={lots}
            onChange={(e) => setLots(e.target.value)}
            className="w-0 min-w-0 flex-1 pr-[2px] text-right text-[6px] leading-none text-[#555555]"
          />
          <button aria-label="More" className="flex h-full w-[9px] items-center justify-center bg-[#e8e8e8]">
            <span className="border-x-2 border-t-2 border-x-transparent border-t-[#444444]" />
          </button>
        </div>
        <button className="w-[26px] leading-none">BUY</button>
      </div>
      <div className="flex flex-1">
        <button className={`${price} border-r`}>
          <b className="leading-[8px]">8057</b>
          <span className="text-[15px] leading-[16px]">29</span>
        </button>
        <button className={price}>
          <b className="leading-[8px]">8064</b>
          <span className="text-[15px] leading-[16px]">22</span>
        </button>
      </div>
    </div>
  );
};

const ChartTabs = () => {
  const tabs = ["EURUSD,M1", "AUDUSD,M1", "BTCUSD,H1", "SEKJPY,H1"];
  const [active, setActive] = useState(tabs[0]);
  return (
    <div className="flex h-[11px] shrink-0 items-start bg-[#f0f0f0] pl-[3px]" role="tablist">
      {tabs.map((tab) => (
        <button
          key={tab}
          role="tab"
          aria-selected={tab === active}
          onClick={() => setActive(tab)}
          className={`h-[11px] border-r px-[5px] leading-none ${
            tab === active ? "border-b border-l border-[#8c8c8c] bg-white text-[#555555]" : "border-[#bcbcbc] text-[#8a8a8a]"
          }`}
        >
          {tab}
        </button>
      ))}
      <div className="ml-auto flex h-full items-center gap-[8px] pr-[4px]" aria-hidden="true">
        <span className="border-y-2 border-r-2 border-y-transparent border-r-[#999999]" />
        <span className="border-y-2 border-l-2 border-y-transparent border-l-[#999999]" />
      </div>
    </div>
  );
};

const StatusBar = () => (
  <footer className="flex h-[11px] shrink-0 items-center border-t border-[#dcdcdc] bg-[#f0f0f0] leading-none text-[#555555]">
    <span className="flex-1">For Help, press F1</span>
    <span className="flex h-full w-[62px] items-center border-l border-[#cccccc] pl-[2px]">Default</span>
    <span className="h-full w-[55px] border-l border-[#cccccc]" />
    <span className="h-full w-[37px] border-l border-[#cccccc]" />
    <span className="h-full w-[37px] border-l border-[#cccccc]" />
    <span className="h-full w-[36px] border-l border-[#cccccc]" />
    <span className="h-full w-[71px] border-l border-[#cccccc]" />
    <span className="flex h-full w-[66px] items-center gap-[2px] border-l border-[#cccccc] pl-[2px]">
      <svg viewBox="0 0 14 7" className="h-[7px] w-[14px]" aria-hidden="true">
        <path d="M0 0h14v7H0z" fill="#b9cfae" />
        <path d="M1 0v7M3 0v7M5 0v7M7 0v7M9 0v7M11 0v7M13 0v7" stroke="#3d6b2e" />
        <path d="M5 3v4M9 2v5M11 4v3" stroke="#2d5f9e" />
      </svg>
      705/11 kb
    </span>
  </footer>
);

const App = () => {
  const menu = ["File", "View", "Insert", "Charts", "Tools", "Window", "Help"];
  return (
    <div className="flex min-h-screen flex-col bg-[#f0f0f0] font-['Open_Sans',sans-serif] text-[6px] text-[#505050]">
      <header className="flex h-[12px] shrink-0 items-center bg-[#1a3d5f]">
        <svg viewBox="0 0 10 8" className="ml-px h-[7px] w-[8px]" aria-hidden="true">
          <rect width="10" height="8" fill="#0b1410" />
          <path d="M1 6l3-3 2 1 3-2v4z" fill="#9fae9c" />
        </svg>
        <span className="ml-[2px] h-[9px] w-[132px] bg-[#244567]" />
        <div className="ml-auto flex text-white">
          <button aria-label="Minimize" className="flex w-6 justify-center">
            <svg viewBox="0 0 10 10" className="size-[6px]"><path d="M0 5h10" stroke="currentColor" strokeWidth="1.6" /></svg>
          </button>
          <button aria-label="Restore" className="flex w-6 justify-center">
            <svg viewBox="0 0 10 10" className="size-[6px]" fill="none" stroke="currentColor" strokeWidth="1.6">
              <path d="M1 3.500h5.500V9H1zM3.500 3V1H9v6H7" />
            </svg>
          </button>
          <button aria-label="Close" className="flex w-6 justify-center">
            <svg viewBox="0 0 10 10" className="size-[6px]"><path d="M1 1l8 8M9 1L1 9" stroke="currentColor" strokeWidth="1.6" /></svg>
          </button>
        </div>
      </header>
      <nav className="flex h-[11px] shrink-0 items-center gap-[8px] border-b border-[#cfcfcf] pl-[3px] leading-none">
        {menu.map((item) => (
          <button key={item}>{item}</button>
        ))}
      </nav>
      <Toolbars />
      <main className="flex min-h-0 flex-1">
        <aside className="flex w-[122px] shrink-0 flex-col gap-[3px] px-[2px] pt-px pb-[2px]">
          <MarketWatch />
          <Navigator />
        </aside>
        <div className="flex min-w-0 flex-1 flex-col">
          <div className="grid flex-1 grid-cols-2 grid-rows-2 gap-y-px border-l-2 border-t border-[#7d8690] bg-[#9aa6b2]">
            <ChartWindow title="SEKJPY,H1"><SekJpyChart /></ChartWindow>
            <ChartWindow title="EURUSD,M1" active><EurUsdChart /></ChartWindow>
            <ChartWindow title="BTCUSD,H1">
              <BtcUsdChart />
              <OneClickTrading />
            </ChartWindow>
            <ChartWindow title="AUDUSD,M1"><AudUsdChart /></ChartWindow>
          </div>
          <ChartTabs />
        </div>
      </main>
      <StatusBar />
    </div>
  );
};

export default App;
